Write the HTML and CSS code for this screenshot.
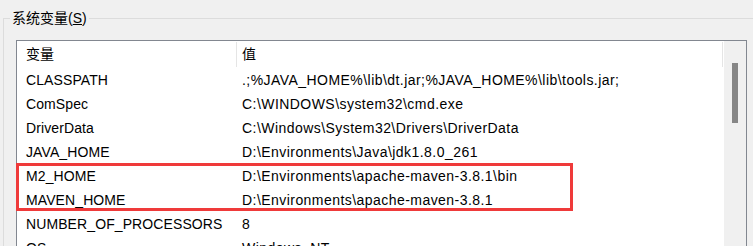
FILE: index.html
```html
<!DOCTYPE html>
<html lang="zh-CN">
<head>
  <meta charset="UTF-8">
  <title>系统变量</title>
  <link rel="stylesheet" href="styles.css">
</head>
<body>
  <div class="group">
    <div class="group-title">系统变量(<u>S</u>)</div>
    <div class="list">
      <div class="list-body">
        <div class="header">
          <div class="col-name">变量</div>
          <div class="col-value">值</div>
        </div>
        <div class="row"><div class="col-name">CLASSPATH</div><div class="col-value">.;%JAVA_HOME%\lib\dt.jar;%JAVA_HOME%\lib\tools.jar;</div></div>
        <div class="row"><div class="col-name">ComSpec</div><div class="col-value">C:\WINDOWS\system32\cmd.exe</div></div>
        <div class="row"><div class="col-name">DriverData</div><div class="col-value">C:\Windows\System32\Drivers\DriverData</div></div>
        <div class="row"><div class="col-name">JAVA_HOME</div><div class="col-value">D:\Environments\Java\jdk1.8.0_261</div></div>
        <div class="row"><div class="col-name">M2_HOME</div><div class="col-value">D:\Environments\apache-maven-3.8.1\bin</div></div>
        <div class="row"><div class="col-name">MAVEN_HOME</div><div class="col-value">D:\Environments\apache-maven-3.8.1</div></div>
        <div class="row"><div class="col-name">NUMBER_OF_PROCESSORS</div><div class="col-value">8</div></div>
        <div class="row"><div class="col-name">OS</div><div class="col-value">Windows_NT</div></div>
      </div>
      <div class="scrollbar"><div class="thumb"></div></div>
    </div>
  </div>
  <div class="highlight"></div>
</body>
</html>
```

FILE: styles.css
```css
html, body {
  overflow: hidden;
}
body {
  margin: 0;
  height: 246px;
  background-color: #f0f0f0;
  font-family: "Liberation Sans", "Noto Sans CJK SC", sans-serif;
  font-size: 14px;
  color: #000;
  position: relative;
}
.group {
  position: relative;
  margin: 18px 0 0 3px;
  padding: 21px 0 0 12px;
  border-top: 1px solid #dcdcdc;
  border-left: 1px solid #dcdcdc;
  height: 300px;
}
.group-title {
  position: absolute;
  top: -11px;
  left: 6px;
  padding: 0 2px;
  line-height: 20px;
  background-color: #f0f0f0;
}
.list {
  display: flex;
  width: 731px;
  height: 300px;
  box-sizing: border-box;
  border: 1px solid #828790;
  background-color: #fff;
}
.list-body {
  flex: 1;
}
.header, .row {
  display: grid;
  grid-template-columns: 220px 486px;
  line-height: 24px;
  white-space: nowrap;
}
.header {
  height: 27px;
  align-items: center;
}
.header .col-name, .header .col-value {
  border-right: 1px solid #e5e5e5;
  height: 25px;
  line-height: 25px;
}
.col-name {
  padding-left: 9px;
  letter-spacing: 0.1px;
}
.col-value {
  padding-left: 5px;
}
.row .col-value {
  letter-spacing: 0.45px;
}
.scrollbar {
  width: 22px;
  background-color: #f0f0f0;
}
.thumb {
  width: 6px;
  height: 60px;
  margin: 22px 0 0 8px;
  background-color: #868686;
}
.highlight {
  position: absolute;
  left: 16px;
  top: 163px;
  width: 557px;
  height: 48px;
  box-sizing: border-box;
  border: 3px solid #ef3a3a;
}
```
